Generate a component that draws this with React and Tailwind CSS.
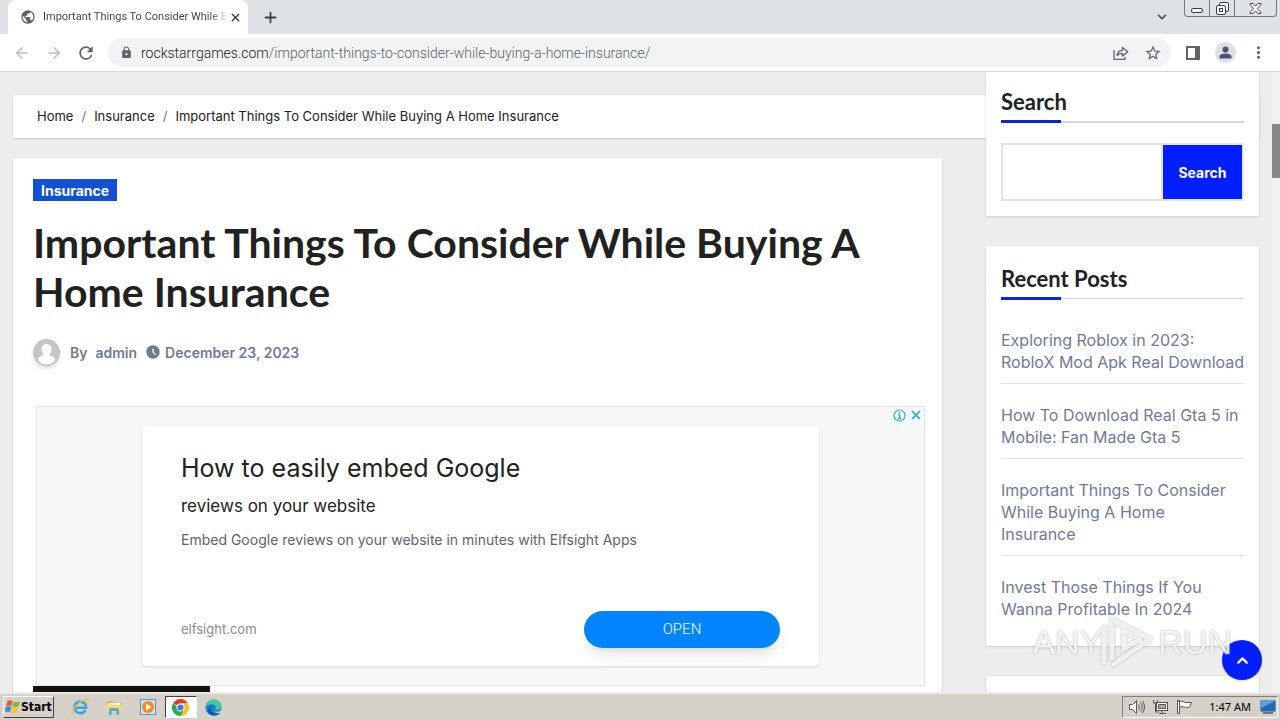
import React, { useState } from "react";
import { ArrowLeft, ArrowRight, ChevronDown, ChevronUp, Plus, X } from "lucide-react";
import {
  MdAccessTimeFilled,
  MdLock,
  MdMoreVert,
  MdPublic,
  MdRefresh,
  MdStarBorder,
} from "react-icons/md";

const recentPosts = [
  "Exploring Roblox in 2023:\nRobloX Mod Apk Real Download",
  "How To Download Real Gta 5 in\nMobile: Fan Made Gta 5",
  "Important Things To Consider\nWhile Buying A Home\nInsurance",
  "Invest Those Things If You\nWanna Profitable In 2024",
];

const WindowButtons = () => (
  <div className="mr-[3px] flex h-[17px] rounded-b border border-t-0 border-[#74777d] text-[#3c4046]">
    <button type="button" aria-label="Minimize" className="flex w-6 items-center justify-center">
      <svg width="12" height="5" viewBox="0 0 12 5" className="mt-1">
        <rect x="0.5" y="0.5" width="11" height="4" rx="1.5" fill="#fff" stroke="currentColor" />
      </svg>
    </button>
    <button
      type="button"
      aria-label="Restore"
      className="flex w-[26px] items-center justify-center border-x border-[#74777d]"
    >
      <svg width="13" height="13" viewBox="0 0 13 13" fill="#fff" stroke="currentColor">
        <rect x="3.5" y="0.5" width="9" height="9" rx="1.5" />
        <rect x="0.5" y="3.5" width="9" height="9" rx="1.5" />
        <rect x="3.5" y="6.5" width="3" height="3" />
      </svg>
    </button>
    <button type="button" aria-label="Close" className="flex w-[41px] items-center justify-center">
      <svg width="13" height="11" viewBox="0 0 13 11">
        <path
          d="M1 .5h3l2.5 2.700L9 .5h3v1L8.300 5.500 12 9.500v1H9L6.500 7.800 4 10.500H1v-1l3.700-4L1 1.500z"
          fill="#fff"
          stroke="currentColor"
        />
      </svg>
    </button>
  </div>
);

const TabStrip = () => (
  <div className="flex h-[34px] items-start bg-[#dee1e6] pl-2 text-[#3c4043]">
    <div className="flex h-full w-60 items-center rounded-t-lg bg-white pl-3 pr-1">
      <MdPublic className="size-4 shrink-0 text-[#5f6368]" />
      <span className="ml-[7px] whitespace-nowrap bg-linear-to-r from-[#3c4043] from-90% to-transparent bg-clip-text font-['Roboto',sans-serif] text-[11px] text-transparent">
        Important Things To Consider While B
      </span>
      <button type="button" aria-label="Close tab" className="ml-auto flex size-6 items-center justify-center">
        <X size={13} strokeWidth={2.5} />
      </button>
    </div>
    <button type="button" aria-label="New tab" className="ml-2 flex h-full w-7 items-center justify-center">
      <Plus size={17} strokeWidth={2.5} />
    </button>
    <div className="flex-1" />
    <button type="button" aria-label="Search tabs" className="mr-[10px] flex h-full w-6 items-center justify-center">
      <ChevronDown size={14} strokeWidth={2.5} />
    </button>
    <WindowButtons />
  </div>
);

const Toolbar = () => (
  <div className="flex h-[38px] items-center border-b border-[#d4d5d8] bg-white px-3 text-[#5f6368]">
    <div className="flex items-center gap-3">
      <button type="button" aria-label="Back" className="flex size-5 items-center justify-center text-[#babcbe]">
        <ArrowLeft size={18} />
      </button>
      <button type="button" aria-label="Forward" className="flex size-5 items-center justify-center text-[#babcbe]">
        <ArrowRight size={18} />
      </button>
      <button type="button" aria-label="Reload" className="flex size-5 items-center justify-center">
        <MdRefresh size={20} />
      </button>
    </div>
    <div className="ml-3 flex h-[29px] flex-1 items-center rounded-full bg-[#f1f3f4] pl-3 pr-2">
      <MdLock size={13} />
      <span className="ml-2 flex-1 whitespace-nowrap font-['Roboto',sans-serif] text-sm font-light text-[#202124]">
        rockstarrgames.com
        <span className="text-[#5f6368]">
          /important-things-to-consider-while-buying-a-home-insurance/
        </span>
      </span>
      <button type="button" aria-label="Share this page" className="mr-3 flex size-5 items-center justify-center">
        <svg width="16" height="16" viewBox="0 0 16 16" fill="none" stroke="currentColor" strokeWidth="1.3">
          <path d="M1 5v9.300h11v-2.500" />
          <path d="M4 10.500c.5-3.500 2.500-5 5.500-5.200V2.500l5.300 4.300-5.300 4.200V8.300C7 8.300 5.500 9 4 10.500z" strokeLinejoin="round" />
        </svg>
      </button>
      <button type="button" aria-label="Bookmark this tab" className="flex size-5 items-center justify-center">
        <MdStarBorder size={18} />
      </button>
    </div>
    <button type="button" aria-label="Side panel" className="ml-3 flex size-5 items-center justify-center">
      <svg width="14" height="14" viewBox="0 0 14 14">
        <path d="M0 0h14v14H0zM2 2v10h7V2z" fill="#5f6368" fillRule="evenodd" />
      </svg>
    </button>
    <button
      type="button"
      aria-label="Profile"
      className="ml-3 flex size-[21px] items-center justify-center rounded-full bg-[#dee1e6]"
    >
      <svg width="13" height="13" viewBox="0 0 13 13" fill="#4a5575">
        <circle cx="6.500" cy="3.500" r="3" />
        <path d="M.5 12.500V10.500C.5 8.500 3.500 7.500 6.500 7.500s6 1 6 3v2z" />
      </svg>
    </button>
    <button type="button" aria-label="Menu" className="ml-3 flex size-5 items-center justify-center">
      <MdMoreVert size={19} />
    </button>
  </div>
);

const Breadcrumb = () => (
  <nav
    aria-label="Breadcrumb"
    className="col-span-2 col-start-1 row-start-1 mt-[23px] flex h-[43px] items-center gap-2 bg-white px-6 text-[13px] text-[#212121] shadow-sm"
  >
    <a href="#home">Home</a>
    <span className="text-gray-500">/</span>
    <a href="#insurance">Insurance</a>
    <span className="text-gray-500">/</span>
    <span>Important Things To Consider While Buying A Home Insurance</span>
  </nav>
);

const AdBanner = () => (
  <div className="relative -mr-[3px] ml-[3px] mt-10 border border-[#e4e4e4] bg-[#f7f7f7] px-[105px] py-[19px]">
    <div className="absolute right-0 top-0 flex gap-[3px] p-[1px] text-[#1fb0c6]">
      <button type="button" aria-label="About this ad">
        <svg width="13" height="13" viewBox="0 0 13 13" fill="none" stroke="currentColor">
          <circle cx="6.500" cy="6.500" r="5.500" strokeWidth="1.200" />
          <path d="M6.500 5.500v4M6.500 3v1.500M5.300 5.800h1.200M5 9.500h3" strokeWidth="1.500" />
        </svg>
      </button>
      <button type="button" aria-label="Close ad">
        <X size={14} strokeWidth={3} />
      </button>
    </div>
    <div className="flex h-60 flex-col rounded bg-white px-[39px] pb-[18px] pt-6 shadow">
      <h2 className="text-[25px] leading-9 text-[#212121]">How to easily embed Google</h2>
      <p className="text-[17px] leading-10 text-[#212121]">reviews on your website</p>
      <p className="text-sm leading-7 text-[#5f6368]">
        Embed Google reviews on your website in minutes with Elfsight Apps
      </p>
      <div className="mt-auto flex items-center justify-between">
        <a href="#elfsight" className="text-[13px] text-[#8a8a8a]">
          elfsight.com
        </a>
        <button
          type="button"
          className="h-[37px] w-[196px] rounded-full bg-[#0085ff] font-['Roboto',sans-serif] text-[15px] font-light text-white shadow-lg"
        >
          OPEN
        </button>
      </div>
    </div>
  </div>
);

const Article = () => (
  <article className="col-start-1 row-start-2 mt-5 bg-white px-5 pt-[21px] text-[#212121] shadow-sm">
    <a
      href="#insurance"
      className="flex h-[22px] w-fit items-center bg-[#1151d3] px-2 text-[14px] font-bold text-white"
    >
      Insurance
    </a>
    <h1 className="mt-[17px] font-['Lato',sans-serif] text-[41px] font-bold leading-[49px]">
      Important Things To Consider While Buying A Home Insurance
    </h1>
    <div className="mt-[22px] flex h-7 items-center text-[14px] font-semibold text-[#717a94]">
      <svg width="27" height="27" viewBox="0 0 27 27" className="rounded-full bg-[#c5c5c5] shadow-md">
        <path
          d="M13.500 5c3 0 5 2.300 5 5 0 2.200-.8 3.500-1.700 4.500-.4 1.600.2 2 1.700 2.500 2.300.8 3.500 1.800 3.500 4-2 3-5 4.500-8.500 4.500S7 24 5 21c0-2.200 1.200-3.200 3.500-4 1.500-.5 2.100-.9 1.700-2.500-.9-1-1.700-2.300-1.700-4.500 0-2.700 2-5 5-5z"
          fill="#fff"
        />
      </svg>
      <span className="ml-[10px]">By</span>
      <a href="#admin" className="ml-2">
        admin
      </a>
      <MdAccessTimeFilled size={16} className="ml-2" />
      <time className="ml-1">December 23, 2023</time>
    </div>
    <AdBanner />
    <div className="h-5 w-[177px] bg-[#111]" />
  </article>
);

const Widget = ({ title, headingClass, children }) => (
  <section className="bg-white px-[15px] shadow-sm">
    <h2
      className={`border-[#d6d6d6] font-['Lato',sans-serif] text-[22px] font-bold leading-6 text-[#212121] ${headingClass}`}
    >
      {title}
      <span className="-mb-[2px] mt-[6px] block h-[3px] w-[60px] bg-[#0a25dd]" />
    </h2>
    {children}
  </section>
);

const Sidebar = () => {
  const [query, setQuery] = useState("");

  return (
    <aside className="z-10 col-start-2 row-span-2 row-start-1 flex flex-col gap-[30px]">
      <Widget title="Search" headingClass="border-b-2 pt-[18px]">
        <form className="flex pb-[15px] pt-5" onSubmit={(event) => event.preventDefault()}>
          <input
            type="search"
            aria-label="Search"
            value={query}
            onChange={(event) => setQuery(event.target.value)}
            className="h-[58px] min-w-0 flex-1 border-2 border-[#e3e3e3] px-3 outline-none"
          />
          <button
            type="submit"
            className="h-[58px] w-[81px] border-2 border-l-0 border-[#e3e7f5] bg-[#001eff] text-[14px] font-bold text-white"
          >
            Search
          </button>
        </form>
      </Widget>
      <Widget title="Recent Posts" headingClass="border-b pt-[21px]">
        <ul className="pb-[26px] pt-[10px] text-base leading-[22px] text-[#717a94]">
          {recentPosts.map((post) => (
            <li
              key={post}
              className="whitespace-pre border-b border-[#e3e3e3] pb-[10px] pt-5 last:border-b-0 last:pb-0"
            >
              <a href="#post">{post}</a>
            </li>
          ))}
        </ul>
      </Widget>
      <section className="flex-1 bg-white shadow-sm" />
    </aside>
  );
};

const Watermark = () => (
  <div
    aria-hidden="true"
    className="pointer-events-none absolute bottom-5 right-12 z-20 flex items-center font-['Liberation_Sans',sans-serif] text-[34px] leading-none text-white/80 drop-shadow-[0_0_1px_#999]"
  >
    ANY
    <svg width="56" height="60" viewBox="0 0 56 60" fill="none" strokeLinecap="round" className="-ml-1 mr-1">
      <path
        d="M6 16v34M14 8v38M14 8l38 19M26 18v18l16-8M52 27L16 52M42 28L26 18"
        stroke="#fff"
        strokeOpacity="0.8"
        strokeWidth="5"
      />
    </svg>
    RUN
  </div>
);

const WindowsLogo = () => (
  <svg width="16" height="16" viewBox="0 0 16 16">
    <path d="M2.500 2C4.500 1 6 1.200 7.500 2L6.500 7C5 6.200 3.200 6.200 1.300 7z" fill="#e8562a" />
    <path d="M8.500 2.500c1.800.9 4 1 6.500 0l-1.500 5c-2.300 1-4.300.8-6-.2z" fill="#7bb83c" />
    <path d="M1 8c2-.9 3.700-.8 5.200 0l-1.200 5c-1.500-.8-3.200-.8-5 0z" fill="#3a86d8" />
    <path d="M7.200 8.500c1.800.9 3.800 1 6 .2l-1.400 5c-2 .8-4 .7-5.900-.3z" fill="#f6c22c" />
  </svg>
);

const IeIcon = () => (
  <svg width="18" height="18" viewBox="0 0 18 18" fill="none">
    <path d="M14.500 12c-1 2-3 3.200-5.300 3.200A5.800 5.800 0 1 1 15 9.700H4.500" stroke="#3ba3e0" strokeWidth="2.600" />
    <path d="M2 16.500C-.5 14 5 7 9 4.200 12 2 16 .2 17 2c.5 1-.3 2.500-.8 3.300" stroke="#efc14a" strokeWidth="1.400" />
  </svg>
);

const FolderIcon = () => (
  <svg width="18" height="18" viewBox="0 0 18 18">
    <path d="M2 3h5l1 1.500h8V13H2z" fill="#e0b84e" />
    <path d="M3 5h12v3H3z" fill="#fff6d0" />
    <path d="M1 7h16v7H1z" fill="#f3d97c" />
    <path d="M4 17v-5q0-2 2-2h6q2 0 2 2v5h-2.500v-4h-5v4z" fill="#58a8d8" />
  </svg>
);

const PlayerIcon = () => (
  <svg width="16" height="16" viewBox="0 0 16 16">
    <rect x="0.500" y="0.500" width="15" height="15" fill="#cfe3f1" stroke="#5c93bd" />
    <circle cx="8" cy="8" r="6" fill="#f58a1f" />
    <path d="M6 4.500v7L11.500 8z" fill="#fff" />
  </svg>
);

const ChromeIcon = () => (
  <svg width="17" height="17" viewBox="0 0 18 18">
    <path d="M9 9L1.200 4.500A9 9 0 0 1 16.800 4.500H9z" fill="#e33b2e" />
    <path d="M9 4.500h7.800A9 9 0 0 1 9 18l4-7z" fill="#fbc116" />
    <path d="M1.200 4.500A9 9 0 0 0 9 18l4-7H9z" fill="#2da94f" />
    <circle cx="9" cy="9" r="4.300" fill="#fff" />
    <circle cx="9" cy="9" r="3.300" fill="#3f7de8" />
  </svg>
);

const EdgeIcon = () => (
  <svg width="17" height="17" viewBox="0 0 18 18">
    <circle cx="9" cy="9" r="8.500" fill="#1583d2" />
    <path d="M.6 8C1.200 3.500 4.700.5 9 .5c5 0 8.500 3.500 8.500 7 0 2.500-2 4-4.300 4-1.500 0-2.600-.5-2-1.300C12.500 8 10.500 5.500 7 5.500 4 5.500 1.500 6.500.6 8z" fill="#45c7a0" />
    <path d="M6 10c0 3.500 3 6 7 5.500 1.500-.2 2.500-.8 3.500-1.600C15 16.500 12 17.700 9 17.500 5 17 3 14 3.500 11 4 8.500 6 7 8 7c-1.300.8-2 1.800-2 3z" fill="#0d56a8" />
    <path d="M8.300 9.500c-.5 2.500 2 4.300 5 4 2-.2 3.200-1.300 4.300-2.700v3.500c-4 1.200-9.500.2-9.300-4.800z" fill="#d5d0c8" />
  </svg>
);

const TrayIcons = () => (
  <div className="flex items-center gap-[7px] text-[#555]">
    <svg width="17" height="16" viewBox="0 0 17 16" fill="none" stroke="currentColor">
      <path d="M1.500 5.500h3l4-4v13l-4-4h-3z" fill="#fff" />
      <path d="M10.500 5.500q2 2.500 0 5M12.500 3.500q3.500 4.500 0 9M14.500 2q4 6 0 12" />
    </svg>
    <svg width="17" height="16" viewBox="0 0 17 16" fill="none" stroke="currentColor">
      <rect x="4.500" y="3.500" width="11" height="8" fill="#fff" />
      <path d="M6.500 5.500h7v4h-7z" fill="#aaa" />
      <path d="M7 14.500h7M10 12v2M1.500 1v3h4V1M3.500 4v9h3" />
    </svg>
    <svg width="17" height="16" viewBox="0 0 17 16" fill="#fff" stroke="currentColor">
      <path d="M1.500 1.500h2v13h-2zM3.500 2.500c3-1 4 .5 6 1h6l-2 4.500c-2 1-3.500.5-5 0-2-.6-3-.4-5 .4z" />
    </svg>
  </div>
);

const Taskbar = () => (
  <footer className="flex h-7 shrink-0 items-center border-t-2 border-[#edebe6] bg-[#d5d0c8] pl-[3px] pr-[2px] font-['DejaVu_Sans_Condensed','DejaVu_Sans',sans-serif] text-black">
    <button
      type="button"
      className="flex h-[22px] items-center border border-b-[#404040] border-l-white border-r-[#404040] border-t-white px-px text-[12px] font-bold"
    >
      <WindowsLogo />
      Start
    </button>
    <div className="ml-[9px] flex items-center">
      <button type="button" aria-label="Internet Explorer" className="flex w-[34px] justify-center">
        <IeIcon />
      </button>
      <button type="button" aria-label="Windows Explorer" className="flex w-[34px] justify-center">
        <FolderIcon />
      </button>
      <button type="button" aria-label="Media Player" className="flex w-[34px] justify-center">
        <PlayerIcon />
      </button>
      <button
        type="button"
        aria-label="Chrome"
        className="flex h-[22px] w-8 items-center justify-center border border-b-white border-l-[#404040] border-r-white border-t-[#404040] bg-white"
      >
        <ChromeIcon />
      </button>
      <button type="button" aria-label="Edge" className="flex w-[34px] justify-center">
        <EdgeIcon />
      </button>
    </div>
    <div className="ml-auto flex h-[22px] items-center border border-b-white border-l-[#808080] border-r-white border-t-[#808080] pl-[5px]">
      <TrayIcons />
      <time className="ml-4 mr-[9px] font-['Noto_Sans',sans-serif] text-[11px]">1:47 AM</time>
      <svg width="16" height="14" viewBox="0 0 16 14" className="mr-px">
        <rect x="0.500" y="0.500" width="15" height="11" rx="1" fill="#2468b8" stroke="#6f8fb5" />
        <path d="M1 1h14L1 8z" fill="#5c9fe0" />
        <path d="M3 13h10" stroke="#555" strokeWidth="1.500" />
      </svg>
    </div>
  </footer>
);

const App = () => {
  return (
    <div className="flex h-screen flex-col overflow-hidden font-['Inter',sans-serif]">
      <header>
        <TabStrip />
        <Toolbar />
      </header>

      <div className="relative flex min-h-0 flex-1 bg-[#ededed]">
        <main className="grid flex-1 grid-cols-[minmax(0,1fr)_273px] grid-rows-[auto_1fr] gap-x-11 overflow-hidden px-[13px]">
          <Breadcrumb />
          <Article />
          <Sidebar />
        </main>
        <div className="w-2 bg-[#f1f1f1] pt-[52px]">
          <div className="h-[54px] bg-[#888]" />
        </div>
        <button
          type="button"
          aria-label="Back to top"
          className="absolute bottom-3 right-[18px] z-10 flex size-10 items-center justify-center rounded-full bg-[#001eff] text-white shadow"
        >
          <ChevronUp size={17} strokeWidth={3} />
        </button>
        <Watermark />
      </div>

      <Taskbar />
    </div>
  );
};

export default App;
